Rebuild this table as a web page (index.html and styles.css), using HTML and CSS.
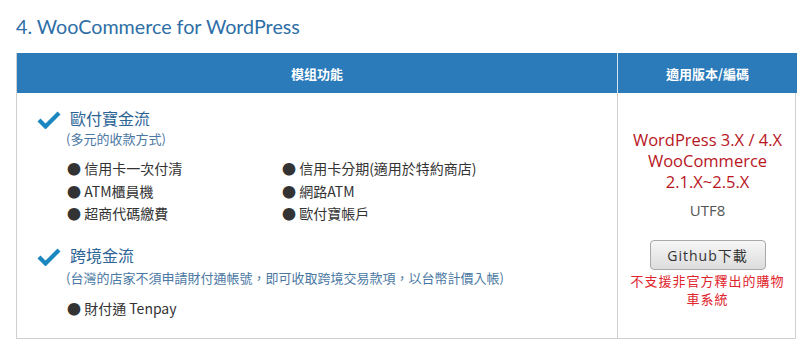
FILE: index.html
```html
<!DOCTYPE html>
<html>
<head>
<meta charset="utf-8">
<link rel="stylesheet" href="styles.css">
</head>
<body>
<h2 class="title">4. WooCommerce for WordPress</h2>
<div class="tbl">
  <div class="th th-main">模组功能</div>
  <div class="th th-side">適用版本/編碼</div>
  <div class="td td-main">
    <div class="sec">
      <div class="sec-head">
        <svg class="check" viewBox="0 0 24 18" width="24" height="18"><path d="M2 9 L8.5 15.5 L22 2" fill="none" stroke="#1b87c1" stroke-width="4.2" stroke-linecap="butt" stroke-linejoin="miter"/></svg>
        <span class="sec-title">歐付寶金流</span>
      </div>
      <div class="sec-note">(多元的收款方式)</div>
      <ul class="items two">
        <li>● 信用卡一次付清</li>
        <li>● 信用卡分期(適用於特約商店)</li>
        <li>● ATM櫃員機</li>
        <li>● 網路ATM</li>
        <li>● 超商代碼繳費</li>
        <li>● 歐付寶帳戶</li>
      </ul>
    </div>
    <div class="sec sec2">
      <div class="sec-head">
        <svg class="check" viewBox="0 0 24 18" width="24" height="18"><path d="M2 9 L8.5 15.5 L22 2" fill="none" stroke="#1b87c1" stroke-width="4.2" stroke-linecap="butt" stroke-linejoin="miter"/></svg>
        <span class="sec-title">跨境金流</span>
      </div>
      <div class="sec-note">(台灣的店家不須申請財付通帳號，即可收取跨境交易款項，以台幣計價入帳)</div>
      <ul class="items">
        <li>● 財付通 Tenpay</li>
      </ul>
    </div>
  </div>
  <div class="td td-side">
    <div class="ver">WordPress 3.X / 4.X<br>WooCommerce<br>2.1.X~2.5.X</div>
    <div class="enc">UTF8</div>
    <button class="btn">Github下載</button>
    <div class="warn">不支援非官方釋出的購物<br>車系統</div>
  </div>
</div>
</body>
</html>
```
FILE: styles.css
```css
html, body { margin: 0; padding: 0; background: #fff; }
body {
  padding: 14px 12px 0 16px;
  font-family: "Noto Sans CJK TC", "Noto Sans", sans-serif;
}
.title {
  margin: 0 0 13px 0;
  font-family: "Lato", "Open Sans", sans-serif;
  font-weight: 400;
  font-size: 19.7px;
  line-height: 26px;
  color: #2d6ea6;
}
.tbl {
  display: grid;
  grid-template-columns: 600px 180px;
  width: 780px;
  border: 1px solid #cfcfcf;
  border-top: none;
  box-sizing: border-box;
}
.th {
  background: #2b7bba;
  color: #fff;
  font-weight: 700;
  font-size: 13px;
  height: 40px;
  display: flex;
  align-items: center;
  justify-content: center;
}
.th-side { border-left: 1px solid #d8e6f2; }
.td-side { border-left: 1px solid #cfcfcf; }
.td-main { padding: 13px 0 19px 0; }
.sec-head {
  display: flex;
  align-items: center;
  padding-left: 20px;
  height: 24px;
}
.check { display: block; margin-top: 4px; }
.sec-title {
  margin-left: 9px;
  font-size: 16px;
  color: #2d6496;
}
.sec-note {
  margin-left: 49px;
  font-size: 13px;
  color: #4b78a3;
  line-height: 20px;
  margin-top: -1px;
}
.items {
  list-style: none;
  margin: 8px 0 0 50px;
  padding: 0;
  font-size: 14px;
  color: #333;
  line-height: 22.5px;
}
.items.two {
  display: grid;
  grid-template-columns: 215px auto;
}
.items li { white-space: nowrap; }
.sec2 { margin-top: 18.5px; }
.sec2 .sec-note { margin-top: 0.5px; }
.sec2 .items { margin-top: 9px; }
.td-side {
  display: flex;
  flex-direction: column;
  align-items: center;
  justify-content: center;
  padding-top: 6px;
  text-align: center;
}
.ver {
  font-family: "Open Sans", "Noto Sans", sans-serif;
  color: #b8161e;
  font-size: 16.5px;
  line-height: 21px;
}
.enc {
  margin-top: 8px;
  font-family: "Open Sans", "Noto Sans", sans-serif;
  font-size: 15px;
  line-height: 20px;
  color: #555;
}
.btn {
  margin-top: 19.5px;
  width: 116px;
  height: 30px;
  border: 1px solid #a9a9a9;
  border-radius: 4px;
  background: linear-gradient(#f6f6f6, #dddddd);
  font-family: "Open Sans", "Noto Sans CJK TC", sans-serif;
  font-size: 14px;
  letter-spacing: 1px;
  color: #333;
  padding: 0;
}
.warn {
  margin-top: 2px;
  font-size: 13px;
  letter-spacing: 1px;
  line-height: 18px;
  color: #e0242c;
}
```
